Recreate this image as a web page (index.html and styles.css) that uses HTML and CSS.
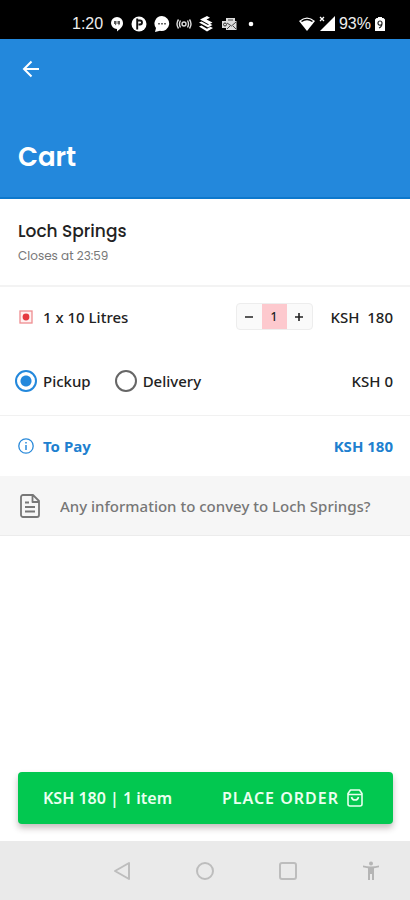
FILE: index.html
```html
<!DOCTYPE html>
<html lang="en">
<head>
<meta charset="utf-8">
<meta name="viewport" content="width=device-width, initial-scale=1">
<title>Cart</title>
<link rel="stylesheet" href="styles.css">
</head>
<body>
<div class="status">
  <span class="status-time">1:20</span>
  <div class="status-icons">
    <svg viewBox="0 0 16 16"><path fill="#fff" d="M8 1a6 6 0 0 1 6 6c0 4-3 6-6 8.500v-2.500A6 6 0 0 1 8 1z"/><path fill="#555" d="M5 5h2.500v3L6 9.500V8H5zM8.500 5H11v3L9.500 9.500V8h-1z"/></svg>
    <svg viewBox="0 0 16 16"><circle cx="8" cy="8" r="7.500" fill="#fff"/><path d="M6.200 2.500v11M6.200 4.500H9a1.800 1.800 0 0 1 0 4H7.500" fill="none" stroke="#111" stroke-width="1.900"/></svg>
    <svg viewBox="0 0 16 16"><path fill="#fff" d="M8 0a7.500 7.500 0 1 1-2 14.800L1 16l1-4A7.500 7.500 0 0 1 8 0z"/><path fill="#666" d="M4 7h2v1.500H4zM7 7h2v1.500H7zM10 7h2v1.500h-2z"/></svg>
    <svg viewBox="0 0 16 16" fill="none" stroke="#ddd" stroke-width="1.400"><circle cx="8" cy="8" r="2"/><path d="M4.500 4.500q-2 3.500 0 7M11.500 4.500q2 3.500 0 7M2.500 3.500q-3 4.500 0 9M13.500 3.500q3 4.500 0 9"/></svg>
    <svg viewBox="0 0 16 16" fill="#fff"><path d="M9 0 2 3.500 11 8.500 14.500 6.500 8.500 3.500 12 1.800zM1 6.500 10 11.500 14.500 9 12 7.800 10 9 3.500 5.500zM1 10.500 9 15.500 15 12 12.500 10.800 9 12.800 3.500 9.500z"/></svg>
    <svg viewBox="0 0 16 16"><path fill="#ddd" d="M5 2h9v3h1.500v9H5v-2H1V5h4z"/><path d="m6 7 4.500 3L15 6M6 13l3-3M15 13l-3-3M7 4h5" stroke="#444" fill="none"/><circle cx="4" cy="8.500" r="1.500" fill="none" stroke="#333"/></svg>
    <svg viewBox="0 0 16 16"><circle cx="8" cy="8" r="2.300" fill="#fff"/></svg>
  </div>
  <div class="status-system">
    <svg viewBox="0 0 16 16"><path fill="#fff" d="M8 15 0 5Q8-2 16 5z"/><path d="M2.500 5.500Q8 1.500 13.500 5.500" stroke="#000" stroke-width="1.500" fill="none"/></svg>
    <svg viewBox="0 0 16 16"><path fill="#fff" d="M16 0v15H1z"/><path d="m1 1 4 4M5 1 1 5" stroke="#fff" stroke-width="1.300"/></svg>
    <span>93%</span>
    <svg class="battery" viewBox="0 0 10 16"><path fill="#fff" d="M3 1h4v1h1.500L10 3.500V15H0V3.500L1.500 2H3z"/><path d="M7 7.500A2 2 0 1 1 3 7a2 2 0 0 1 4 0q0 4-3 5" stroke="#222" stroke-width="1.200" fill="none"/></svg>
  </div>
</div>

<header class="header">
  <button class="back" type="button" aria-label="Back">
    <svg viewBox="0 0 18 18"><path d="M17 9H2M9.500 1.500 2 9l7.500 7.500" fill="none" stroke="#fff" stroke-width="2"/></svg>
  </button>
  <h1>Cart</h1>
</header>

<main class="main">
  <section class="store">
    <h2>Loch Springs</h2>
    <p>Closes at 23:59</p>
  </section>

  <section class="order">
    <div class="row item">
      <svg class="mark" viewBox="0 0 14 14"><rect x="1" y="1" width="12" height="12" fill="#fff1f1" stroke="#ee8d90" stroke-width="1.300"/><circle cx="7" cy="7" r="3.400" fill="#e53940"/></svg>
      <span class="name">1 x 10 Litres</span>
      <div class="stepper">
        <button type="button" aria-label="Remove one"><svg viewBox="0 0 10 10"><path d="M1 5h8" stroke="#222" stroke-width="1.600"/></svg></button>
        <output>1</output>
        <button type="button" aria-label="Add one"><svg viewBox="0 0 10 10"><path d="M1 5h8M5 1v8" stroke="#222" stroke-width="1.600"/></svg></button>
      </div>
      <span class="price">KSH&nbsp; 180</span>
    </div>
    <div class="row options">
      <label><input type="radio" name="method" checked>Pickup</label>
      <label><input type="radio" name="method">Delivery</label>
      <span class="price">KSH 0</span>
    </div>
  </section>

  <section class="row total">
    <svg class="info" viewBox="0 0 16 16"><circle cx="8" cy="8" r="7.200" fill="none" stroke="#2a8ada" stroke-width="1.300"/><path d="M8 7v5M8 4v1.600" stroke="#2a8ada" stroke-width="1.500"/></svg>
    <span>To Pay</span>
    <span class="price">KSH 180</span>
  </section>

  <label class="note">
    <svg viewBox="0 0 20 24"><path d="M3 1h10l6 6v14a2 2 0 0 1-2 2H3a2 2 0 0 1-2-2V3a2 2 0 0 1 2-2zM12.500 1.500V8H19M5 8.500h4M5 13h10M5 17.500h10" fill="none" stroke="#777" stroke-width="1.800" stroke-linejoin="round"/></svg>
    <input type="text" placeholder="Any information to convey to Loch Springs?" aria-label="Note to the store">
  </label>
</main>

<footer class="checkout">
  <button class="place" type="button">
    <span>KSH 180 | 1 item</span>
    <span class="action">PLACE ORDER
      <svg viewBox="0 0 16 18" fill="none" stroke="#e8ffee" stroke-width="1.600" stroke-linejoin="round"><path d="M3.500 1h9L15 4.500V15a2 2 0 0 1-2 2H3a2 2 0 0 1-2-2V4.500zM1 5.500h14M4.500 8q.5 3 3.500 3t3.500-3"/></svg>
    </span>
  </button>
</footer>

<nav class="nav">
  <button type="button" aria-label="System back"><svg viewBox="0 0 20 20"><path d="M17 2v16L3 10z"/></svg></button>
  <button type="button" aria-label="Home"><svg viewBox="0 0 20 20"><circle cx="10" cy="10" r="8"/></svg></button>
  <button type="button" aria-label="Recent apps"><svg viewBox="0 0 20 20"><rect x="2" y="2" width="16" height="16" rx="2"/></svg></button>
  <button type="button" aria-label="Accessibility"><svg viewBox="0 0 20 20"><circle class="solid" cx="10" cy="2.500" r="2"/><path class="solid" d="M2 4.500q8 2 16 0v1.800q-2.500.7-5 .9V19h-2v-6H9v6H7V7.200q-2.500-.2-5-.9z"/></svg></button>
</nav>
</body>
</html>
```
FILE: styles.css
```css
* {
  box-sizing: border-box;
}

body {
  margin: 0;
  min-height: 100vh;
  display: flex;
  flex-direction: column;
  background: #fff;
  color: #222;
  font: 500 15px/20px "Noto Sans", sans-serif;
}

h1, h2, p {
  margin: 0;
}

svg {
  display: block;
  flex: none;
}

button {
  border: 0;
  padding: 0;
  background: none;
  color: inherit;
  font: inherit;
}

.status {
  display: flex;
  align-items: center;
  height: 39px;
  padding: 8px 25px 0 72px;
  background: #000;
  color: #eee;
  font: 400 16px/20px "Liberation Sans", sans-serif;
}

.status svg {
  width: 16px;
  height: 16px;
}

.status-time {
  width: 37px;
}

.status-icons {
  display: flex;
  justify-content: space-between;
  width: 150px;
}

.status-system {
  display: flex;
  align-items: center;
  gap: 4px;
  margin-left: auto;
}

.status .battery {
  width: 10px;
}

.header {
  display: flex;
  flex-direction: column;
  justify-content: space-between;
  height: 160px;
  padding: 20px 18px 22px;
  background: #2388dc;
  border-bottom: 2px solid #0d78cc;
  color: #fff;
}

.back {
  align-self: flex-start;
  padding: 0 4px;
}

.back svg {
  width: 18px;
  height: 20px;
}

h1 {
  font: 600 26px/36px Poppins, Inter, sans-serif;
}

.store {
  height: 88px;
  padding: 20px 18px;
  border-bottom: 2px solid #f3f3f3;
}

h2 {
  font: 500 17px/24px Poppins, Inter, sans-serif;
}

.store p {
  padding-top: 4px;
  color: #777;
  font: 400 12px/18px Poppins, Inter, sans-serif;
}

.row {
  display: flex;
  align-items: center;
  padding: 0 17px 0 18px;
}

.price {
  margin-left: auto;
}

.order {
  border-bottom: 1px solid #f1f1f1;
}

.item {
  height: 59px;
}

.mark {
  width: 14px;
  height: 14px;
  margin: 0 10px 0 1px;
}

.stepper {
  display: grid;
  grid-template-columns: repeat(3, 25px);
  width: 77px;
  height: 27px;
  margin-left: auto;
  border: 1px solid #ededed;
  border-radius: 4px;
  background: #fafafa;
  overflow: hidden;
}

.stepper + .price {
  margin-left: 18px;
}

.stepper button {
  display: grid;
  place-items: center;
}

.stepper svg {
  width: 10px;
  height: 10px;
}

.stepper output {
  background: #fdc9ce;
  font-size: 12px;
  line-height: 25px;
  text-align: center;
}

.options {
  height: 69px;
  gap: 24px;
  padding-left: 15px;
}

.options label {
  display: flex;
  align-items: center;
  gap: 6px;
}

.options input {
  appearance: none;
  width: 22px;
  height: 22px;
  margin: 0;
  border: 2px solid #666;
  border-radius: 50%;
}

.options input:checked {
  border-color: #2388dc;
  background: radial-gradient(circle, #2388dc 5px, transparent 6px);
}

.total {
  height: 60px;
  color: #2080cf;
  font-weight: 700;
}

.info {
  width: 16px;
  height: 16px;
  margin-right: 9px;
}

.note {
  display: flex;
  align-items: center;
  gap: 20px;
  height: 60px;
  padding: 0 10px 0 20px;
  background: #f6f6f6;
  border-bottom: 1px solid #ececec;
}

.note svg {
  width: 20px;
  height: 24px;
}

.note input {
  flex: 1;
  min-width: 0;
  padding: 0;
  border: 0;
  outline: 0;
  background: none;
  font: inherit;
}

.note input::placeholder {
  color: #777;
}

.checkout {
  margin-top: auto;
  padding: 0 17px 17px 18px;
}

.place {
  display: flex;
  align-items: center;
  justify-content: space-between;
  width: 100%;
  height: 52px;
  padding: 0 30px 0 25px;
  border-radius: 4px;
  background: #02c850;
  box-shadow: 0 4px 6px rgb(60 40 40 / 30%);
  color: #eafff0;
  font-size: 16px;
  font-weight: 600;
}

.action {
  display: flex;
  align-items: center;
  gap: 8px;
  letter-spacing: 1px;
}

.action svg {
  width: 16px;
  height: 18px;
}

.nav {
  display: flex;
  justify-content: space-between;
  align-items: center;
  height: 59px;
  padding: 0 29px 0 112px;
  background: #eaeaea;
}

.nav svg {
  width: 20px;
  height: 20px;
  fill: none;
  stroke: #bdbdbd;
  stroke-width: 2;
  stroke-linejoin: round;
}

.nav .solid {
  fill: #b5b5b5;
  stroke: none;
}
```
